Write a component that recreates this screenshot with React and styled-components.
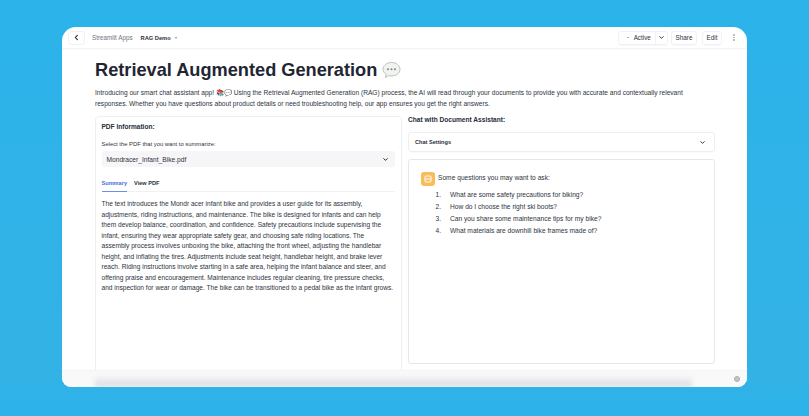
import React from "react";
import styled, { createGlobalStyle } from "styled-components";

const Global = createGlobalStyle`
  html, body { margin: 0; padding: 0; height: 100%; }
  body { background: #2db3e8; font-family: "Liberation Sans", Arial, sans-serif; overflow: hidden; }
  #root { height: 100%; }
`;
const Page = styled.div`
  box-sizing: border-box; width: 809px; height: 416px; padding: 27px 62px 29px 62px;
  background: linear-gradient(#2bb3ea 0, #33b2e5 90%, #2bb3ea 100%);
`;
const Window = styled.div`
  width: 685px; height: 360px; background: #fff; border-radius: 14px 14px 9px 9px;
  display: flex; flex-direction: column; overflow: hidden;
`;
const Header = styled.header`
  height: 21px; flex: none; display: flex; align-items: center; padding: 0 6px 0 6px;
  border-bottom: 1px solid #f3f4f5; box-shadow: 0 1px 2px rgba(0,0,0,.02);
`;
const BackBtn = styled.button`
  box-sizing: border-box; width: 17px; height: 14px; padding: 0; border: 1px solid #f0f1f3; border-radius: 3px; background: #fff;
  display: flex; align-items: center; justify-content: center;
`;
const Crumb = styled.span`
  font-size: ${p => p.$bold ? 5.7 : 6.3}px; margin-left: ${p => p.$ml}px; color: ${p => p.$bold ? "#2b3040" : "#6f7484"};
  font-weight: ${p => p.$bold ? 700 : 400};
`;
const Caret = styled.span`
  width: 0; height: 0; margin-left: 4px; border: 1.5px solid transparent; border-top: 2px solid #888; margin-top: 2px;
`;
const Spacer = styled.div` flex: 1; `;
const Group = styled.div`
  display: flex; height: 14px; box-sizing: border-box; border: 1px solid #f0f1f3; border-radius: 3px; margin-right: ${p => p.$mr}px;
  box-shadow: 0 1px 1px rgba(0,0,0,.03);
`;
const TBtn = styled.div`
  box-sizing: border-box; display: flex; align-items: center; justify-content: center; gap: 5px; width: ${p => p.$w}px;
  padding-left: ${p => p.$pl || 0}px;
  font-size: 6.3px; color: #2b3040; border-left: ${p => p.$div ? "1px solid #f0f1f3" : "none"};
`;
const Dot = styled.span` width: 1.5px; height: 1.5px; border-radius: 50%; background: #9aa; `;
const Kebab = styled.div`
  width: 14px; height: 15px; display: flex; flex-direction: column; align-items: center; justify-content: center; gap: 1px;
  i { width: 1.5px; height: 1.5px; border-radius: 50%; background: #aeb2b8; display: block; }
`;
const Main = styled.main`
  flex: 1; min-height: 0; overflow: hidden; padding: 10px 32px 0 33px;
`;
const Title = styled.h1`
  margin: 0; font-size: 18.2px; line-height: 22px; font-weight: 700; color: #1f2633; display: flex; align-items: center; gap: 5px;
`;
const Intro = styled.p`
  margin: 7px 0 0; font-size: 6.6px; line-height: 10.6px; color: #2d3340; white-space: nowrap;
`;
const Columns = styled.div`
  display: grid; grid-template-columns: 307px 307px; gap: 6px; margin-top: 7px; height: 260px;
`;
const LeftCard = styled.section`
  box-sizing: border-box; border: 1px solid #eceef1; border-radius: 4px 4px 0 0; padding: 5px 6px 0 5.5px; height: 270px;
`;
const CardHead = styled.h2`
  margin: 0; font-size: 6.55px; line-height: 10px; font-weight: 700; color: #272c38;
`;
const Label = styled.label`
  display: block; margin-top: 8px; font-size: 5.85px; line-height: 8px; color: #2d3340;
`;
const Select = styled.div`
  height: 16px; margin-top: 3px; background: #f6f6f8; border-radius: 3px; display: flex; align-items: center;
  justify-content: space-between; padding: 0 6px 0 5px; font-size: 6.65px; color: #2d3340;
`;
const Tabs = styled.div`
  display: flex; gap: 7px; margin-top: 8px; border-bottom: 1px solid #f0f1f3; height: 16px;
`;
const Tab = styled.div`
  font-size: 5.6px; font-weight: 700; line-height: 16px; height: 16px; color: ${p => p.$on ? "#4a6cd8" : "#2b3040"};
  border-bottom: ${p => p.$on ? "1px solid #6f8ee6" : "none"};
`;
const Summary = styled.p`
  margin: 7px 0 0; font-size: 6.6px; line-height: 10.5px; color: #2d3340; white-space: nowrap;
`;
const RightCol = styled.section` display: flex; flex-direction: column; `;
const ChatHead = styled.h2`
  margin: 0; font-size: 6.6px; line-height: 8px; font-weight: 700; color: #272c38;
`;
const Expander = styled.div`
  box-sizing: border-box; height: 20px; margin-top: 8px; border: 1px solid #eceef1; border-radius: 3px; display: flex;
  align-items: center; justify-content: space-between; padding: 0 8px 0 6px; font-size: 5.6px; font-weight: 700; color: #2b3040;
  box-shadow: 0 1px 1px rgba(0,0,0,.02);
`;
const ChatBox = styled.div`
  box-sizing: border-box; height: 205px; margin-top: 7px; border: 1px solid #e6e7ea; border-radius: 3px; padding: 12px 0 0 12px;
`;
const Msg = styled.div` display: flex; gap: 3px; `;
const Avatar = styled.div`
  width: 14px; height: 14px; border-radius: 3px; background: #f8bd56; flex: none; display: flex; align-items: center; justify-content: center;
`;
const MsgBody = styled.div` font-size: 6.65px; line-height: 10px; color: #2d3340; padding-top: 1px; `;
const MsgOl = styled.ol`
  margin: 6px 0 0; padding: 0 0 0 5px; line-height: 11.8px; li { padding-left: 7px; }
`;
const Footer = styled.footer`
  height: 16px; flex: none; position: relative; background: #f9f9fa; border-top: 1px solid #f3f4f5;
  display: flex; align-items: center; justify-content: flex-end; padding-right: 7px;
  &::before {
    content: ""; position: absolute; left: 33px; right: 55px; bottom: 0; height: 12px;
    background: linear-gradient(rgba(222,224,228,0), #d8dadf);
    filter: blur(2px);
  }
`;
const Badge = styled.div`
  box-sizing: border-box; width: 6px; height: 6px; border-radius: 50%; background: #c4c7ca; border: 1px solid #a9acb0; position: relative;
`;

const Chev = ({ c = "#333", s = 7 }) => (
  <svg width={s} height={s} viewBox="0 0 8 8" fill="none"><path d="M2 3l2 2 2-2" stroke={c} strokeWidth="1.1" strokeLinecap="round" strokeLinejoin="round" /></svg>
);

const summary = [
  "The text introduces the Mondr acer infant bike and provides a user guide for its assembly,",
  "adjustments, riding instructions, and maintenance. The bike is designed for infants and can help",
  "them develop balance, coordination, and confidence. Safety precautions include supervising the",
  "infant, ensuring they wear appropriate safety gear, and choosing safe riding locations. The",
  "assembly process involves unboxing the bike, attaching the front wheel, adjusting the handlebar",
  "height, and inflating the tires. Adjustments include seat height, handlebar height, and brake lever",
  "reach. Riding instructions involve starting in a safe area, helping the infant balance and steer, and",
  "offering praise and encouragement. Maintenance includes regular cleaning, tire pressure checks,",
  "and inspection for wear or damage. The bike can be transitioned to a pedal bike as the infant grows.",
];

export default function App() {
  return (
    <Page>
      <Global />
      <Window>
        <Header>
          <BackBtn>
            <svg width="7" height="7" viewBox="0 0 8 8" fill="none"><path d="M5 1.500L2.600 4 5 6.500" stroke="#222" strokeWidth="1.200" strokeLinecap="round" strokeLinejoin="round" /></svg>
          </BackBtn>
          <Crumb $ml={7}>Streamlit Apps</Crumb>
          <Crumb $ml={8} $bold>RAG Demo</Crumb>
          <Caret />
          <Spacer />
          <Group $mr={3}>
            <TBtn $w={36} $pl={4}><Dot />Active</TBtn>
            <TBtn $w={12} $div><Chev /></TBtn>
          </Group>
          <Group $mr={5}><TBtn $w={24}>Share</TBtn></Group>
          <Group $mr={5}><TBtn $w={18}>Edit</TBtn></Group>
          <Kebab><i /><i /><i /></Kebab>
        </Header>
        <Main>
          <Title>
            Retrieval Augmented Generation
            <svg width="19" height="18" viewBox="0 0 19 18">
              <path d="M9.500 1.500C14 1.500 18 4.300 18 8.300c0 4-4 6.600-8.500 6.600-1 0-2-.1-2.900-.4L3.500 16.600l.6-3.500C2 11.900 1 10.200 1 8.300 1 4.300 5 1.500 9.500 1.500z" fill="#f1f3f1" stroke="#b9c0bd" strokeWidth="1" />
              <circle cx="6" cy="8.300" r="1" fill="#7d8580" /><circle cx="9.500" cy="8.300" r="1" fill="#7d8580" /><circle cx="13" cy="8.300" r="1" fill="#7d8580" />
            </svg>
          </Title>
          <Intro>
            Introducing our smart chat assistant app! 📚💬 Using the Retrieval Augmented Generation (RAG) process, the AI will read through your documents to provide you with accurate and contextually relevant<br />
            responses. Whether you have questions about product details or need troubleshooting help, our app ensures you get the right answers.
          </Intro>
          <Columns>
            <LeftCard>
              <CardHead>PDF Information:</CardHead>
              <Label>Select the PDF that you want to summarize:</Label>
              <Select>Mondracer_Infant_Bike.pdf<Chev c="#222" /></Select>
              <Tabs>
                <Tab $on>Summary</Tab>
                <Tab>View PDF</Tab>
              </Tabs>
              <Summary>
                {summary.map((l, i) => <React.Fragment key={i}>{l}<br /></React.Fragment>)}
              </Summary>
            </LeftCard>
            <RightCol>
              <ChatHead>Chat with Document Assistant:</ChatHead>
              <Expander>Chat Settings<Chev c="#333" /></Expander>
              <ChatBox>
                <Msg>
                  <Avatar>
                    <svg width="10" height="10" viewBox="0 0 10 10" fill="none">
                      <path d="M2 4V3a1 1 0 0 1 1-1h4a1 1 0 0 1 1 1v1M2 6v1a1 1 0 0 0 1 1h4a1 1 0 0 0 1-1V6M1.500 5h7" stroke="#fff" strokeWidth="1" strokeLinecap="round" />
                    </svg>
                  </Avatar>
                  <MsgBody>
                    Some questions you may want to ask:
                    <MsgOl>
                      <li>What are some safety precautions for biking?</li>
                      <li>How do I choose the right ski boots?</li>
                      <li>Can you share some maintenance tips for my bike?</li>
                      <li>What materials are downhill bike frames made of?</li>
                    </MsgOl>
                  </MsgBody>
                </Msg>
              </ChatBox>
            </RightCol>
          </Columns>
        </Main>
        <Footer><Badge /></Footer>
      </Window>
    </Page>
  );
}
